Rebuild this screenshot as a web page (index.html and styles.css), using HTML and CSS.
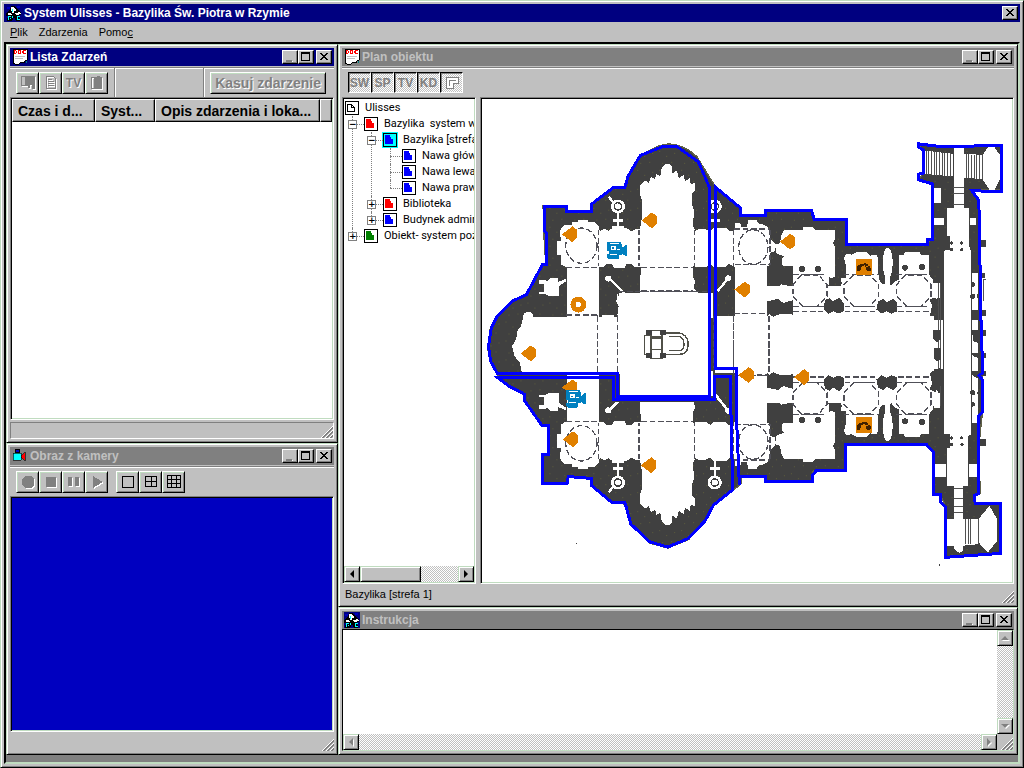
FILE: index.html
```html
<!DOCTYPE html>
<html lang="pl">
<head>
<meta charset="utf-8">
<title>System Ulisses - Bazylika Św. Piotra w Rzymie</title>
<link rel="stylesheet" href="styles.css">
</head>
<body>
<svg class="defs" aria-hidden="true">
  <symbol id="i-min" viewBox="0 0 12 10"><path d="M2 8h6v2H2z" fill="#808080"/><path d="M8 9h1v2H3v-1h5z" fill="#fff"/></symbol>
  <symbol id="i-max" viewBox="0 0 12 10"><path d="M1 0h9v9H1zM2 2v6h7V2z" fill="#000" fill-rule="evenodd"/></symbol>
  <symbol id="i-close" viewBox="0 0 12 10"><path d="M2 1h2v1h1v1h2V2h1V1h2v1H9v1H8v1H7v1h1v1h1v1h1v1H8V7H7V6H5v1H4v1H2V7h1V6h1V5h1V4H4V3H3V2H2z" fill="#000"/></symbol>
  <symbol id="i-app" viewBox="0 0 16 16"><path d="M0 0h16v16H0z" fill="#000080"/><path d="M5 1h4l3 4 3 2v3h-2l1 6h-4l-2-4-2 4H1l1-5H0V8l4-3z" fill="#000"/><path d="M5 2h3v1h1v1h1v2H8v2H6V6H5zM2 8h3v1h1v1H2zM9 8h3V7h2v1h1v1h-2v1h-3V9H9z" fill="#fff"/><path d="M2 11h3v1H3v3H2zM6 11h1v2H6zM11 11h3v1h-2v2h2v1h-3zM4 13h1v1H4zM6 4h1v3H6z" fill="#00ffff"/><path d="M11 1h3v2h-3zM1 2h3v2H1z" fill="#0000c0"/></symbol>
  <symbol id="i-doc" viewBox="0 0 16 16"><path d="M1 0h14v11l-2 1-1 2-3-1-2 2H3l-1-1H1z" fill="#fff" stroke="#000"/><path d="M2 1h2v1h1v2H4v1H2zM6 1h3v4H6zM11 1h3v1h-2v2h2v1h-3v-1h-1V2h1z" fill="#f00"/><path d="M3 2h1v2H3zM7 2h1v2H7z" fill="#fff"/><path d="M3 7h10v1H3zM3 9h8v1H3z" fill="#c0c0c0"/><path d="M14 12h1v2h-1z" fill="#008080"/></symbol>
  <symbol id="i-cam" viewBox="0 0 16 16"><path d="M3 1h4v3H3z" fill="#0000c0" stroke="#000"/><path d="M1 5h8v7H1z" fill="#0ff" stroke="#000" stroke-width=".6"/><path d="M9 8l4-4v9l-4-4z" fill="#f00" stroke="#000" stroke-width=".6"/></symbol>
  <symbol id="i-node" viewBox="0 0 14 14"><path d="M0 0h14v14H0z" fill="#000"/><path d="M1 1h12v12H1z" class="node-bg"/><path d="M2 2h5v2h1v2h2v5H2z" fill="currentColor"/></symbol>
  <symbol id="i-root" viewBox="0 0 14 14"><path d="M.5.5h13v13H.5z" fill="#fff" stroke="#000"/><path d="M2.500 3.500h4v3h3v4h-7zM6.500 3.500l3 3" fill="none" stroke="#000"/></symbol>
  <symbol id="i-grip" viewBox="0 0 12 12"><path d="M0 12L12 0M4 12l8-8M8 12l4-4" stroke="#fff" stroke-width="1.200"/><path d="M1.500 12L12 1.500M5.500 12L12 5.500M9.500 12L12 9.500" stroke="#808080" stroke-width="1.600"/></symbol>
</svg>

<div class="app frame">
  <header class="title active">
    <svg class="ico"><use href="#i-app"/></svg><h1>System Ulisses - Bazylika Św. Piotra w Rzymie</h1>
    <button class="cap" aria-label="Zamknij"><svg><use href="#i-close"/></svg></button>
  </header>
  <nav class="menu">
    <button><u>P</u>lik</button><button>Zdarzenia</button><button>Pomo<u>c</u></button>
  </nav>
  <main class="mdi">
    <div class="col left">
      <section class="frame win events">
        <header class="title active">
          <svg class="ico"><use href="#i-doc"/></svg><h2>Lista Zdarzeń</h2>
          <button class="cap" aria-label="Minimalizuj"><svg><use href="#i-min"/></svg></button><button class="cap" aria-label="Maksymalizuj"><svg><use href="#i-max"/></svg></button><button class="cap gap" aria-label="Zamknij"><svg><use href="#i-close"/></svg></button>
        </header>
        <div class="toolbar">
          <div class="group">
            <button class="tool off" aria-label="Zapisz"><svg viewBox="0 0 16 16"><path d="M1 1h14v13h-3v-4h-2v3H8v-2H1z" fill="#808080"/><path d="M2 2h3v8H2z" fill="#c0c0c0"/></svg></button>
            <button class="tool off" aria-label="Dokument"><svg viewBox="0 0 16 16"><path d="M3.500 1.500h7l2 2v10h-9z" fill="none" stroke="#808080"/><path d="M5 4.500h4M5 6.500h6M5 8.500h6M5 10.500h6" stroke="#808080"/></svg></button>
            <button class="tool off">TV</button>
            <button class="tool off" aria-label="Drzwi"><svg viewBox="0 0 16 16"><path d="M2.500 2.500h3v11h-3z" fill="none" stroke="#808080"/><path d="M6 2h2V1h3v1h2v12H6z" fill="#808080"/></svg></button>
          </div>
          <div class="group end"><button class="tool off wide">Kasuj zdarzenie</button></div>
        </div>
        <div class="sunken list">
          <table>
            <thead><tr><th class="c1">Czas i d...</th><th class="c2">Syst...</th><th class="c3">Opis zdarzenia i loka...</th><th></th></tr></thead>
          </table>
        </div>
        <footer class="status boxed"><svg class="grip"><use href="#i-grip"/></svg></footer>
      </section>

      <section class="frame win camera">
        <header class="title">
          <svg class="ico"><use href="#i-cam"/></svg><h2>Obraz z kamery</h2>
          <button class="cap" aria-label="Minimalizuj"><svg><use href="#i-min"/></svg></button><button class="cap" aria-label="Maksymalizuj"><svg><use href="#i-max"/></svg></button><button class="cap gap" aria-label="Zamknij"><svg><use href="#i-close"/></svg></button>
        </header>
        <div class="toolbar">
          <div class="row">
            <button class="tool off" aria-label="Nagrywaj"><svg viewBox="0 0 16 16"><path d="M5 2h6l3 3v6l-3 3H5l-3-3V5z" fill="#808080"/></svg></button>
            <button class="tool off" aria-label="Zatrzymaj"><svg viewBox="0 0 16 16"><path d="M3 3h10v10H3z" fill="#808080"/></svg></button>
            <button class="tool off" aria-label="Pauza"><svg viewBox="0 0 16 16"><path d="M2 3h4v9H2zM9 3h4v9H9z" fill="#808080"/></svg></button>
            <button class="tool off" aria-label="Odtwarzaj"><svg viewBox="0 0 16 16"><path d="M4 2l10 6-10 6z" fill="#808080"/></svg></button>
          </div>
          <div class="row views">
            <button class="tool" aria-label="Jeden obraz"><svg viewBox="0 0 16 16"><path d="M2.500 2.500h11v11h-11z" fill="none" stroke="#000"/></svg></button>
            <button class="tool" aria-label="Cztery obrazy"><svg viewBox="0 0 16 16"><path d="M2.500 2.500h11v10h-11zM8 2v11M2 7.500h12" fill="none" stroke="#000"/></svg></button>
            <button class="tool" aria-label="Dziewięć obrazów"><svg viewBox="0 0 16 16"><path d="M1.500 1.500h13v12h-13zM5.500 1v13M10.500 1v13M1 5.500h14M1 9.500h14" fill="none" stroke="#000"/></svg></button>
          </div>
        </div>
        <div class="sunken video"></div>
        <footer class="status tall"><svg class="grip"><use href="#i-grip"/></svg></footer>
      </section>
    </div>

    <div class="col right">
      <section class="frame win plan">
        <header class="title">
          <svg class="ico"><use href="#i-doc"/></svg><h2>Plan obiektu</h2>
          <button class="cap" aria-label="Minimalizuj"><svg><use href="#i-min"/></svg></button><button class="cap" aria-label="Maksymalizuj"><svg><use href="#i-max"/></svg></button><button class="cap gap" aria-label="Zamknij"><svg><use href="#i-close"/></svg></button>
        </header>
        <div class="toolbar">
          <div class="row">
            <button class="tool on">SW</button><button class="tool on">SP</button><button class="tool on">TV</button><button class="tool on">KD</button>
            <button class="tool on" aria-label="Strefa"><svg viewBox="0 0 16 16"><path d="M2.500 2.500h12v6h-5v5h-7z" fill="#fff" stroke="#808080"/><path d="M5 5h7v1H6v5H5z" fill="#808080"/></svg></button>
          </div>
        </div>
        <div class="split">
          <div class="sunken treebox">
            <ul class="tree">
              <li><span class="node root"><svg class="ni"><use href="#i-root"/></svg>Ulisses</span>
                <ul>
                  <li><span class="node"><button class="exp" aria-label="Zwiń">−</button><svg class="ni red"><use href="#i-node"/></svg>Bazylika&nbsp; system wł</span>
                    <ul>
                      <li><span class="node"><button class="exp" aria-label="Zwiń">−</button><svg class="ni blue sel"><use href="#i-node"/></svg>Bazylika [strefa</span>
                        <ul>
                          <li><span class="node leaf"><svg class="ni blue"><use href="#i-node"/></svg>Nawa głów</span></li>
                          <li><span class="node leaf"><svg class="ni blue"><use href="#i-node"/></svg>Nawa lewa</span></li>
                          <li><span class="node leaf"><svg class="ni blue"><use href="#i-node"/></svg>Nawa praw</span></li>
                        </ul>
                      </li>
                      <li><span class="node"><button class="exp" aria-label="Rozwiń">+</button><svg class="ni red"><use href="#i-node"/></svg>Biblioteka</span></li>
                      <li><span class="node"><button class="exp" aria-label="Rozwiń">+</button><svg class="ni blue"><use href="#i-node"/></svg>Budynek admir</span></li>
                    </ul>
                  </li>
                  <li><span class="node"><button class="exp" aria-label="Rozwiń">+</button><svg class="ni green"><use href="#i-node"/></svg>Obiekt- system poż</span></li>
                </ul>
              </li>
            </ul>
            <div class="hbar"><button class="sb left-arrow" aria-label="W lewo"></button><span class="thumb"></span><button class="sb right-arrow" aria-label="W prawo"></button></div>
          </div>
          <div class="sunken mapbox">
            <svg class="map" viewBox="6 -93 1590 1452" role="img" aria-label="Plan bazyliki">
              <defs>
                <pattern id="stone" width="66" height="57" patternUnits="userSpaceOnUse"><path d="M0 0h66v57H0z" fill="#404040"/><path d="M9 6h3v3H9zM30 21h3v3h-3zM54 12h3v3h-3zM18 42h3v3h-3zM45 39h3v3h-3z" fill="#5c5c3c"/></pattern>
                <g id="sensor"><path d="M-24 0L7 -24L22 -13V10L7 24z" fill="#e08000"/></g>
                <g id="phone"><path d="M0 0h48v48H0z" fill="#e08000"/><path d="M3 27q0-6 8-9l18-5 8 4v5l-8 2-3-4-9 4-1 6-5 8H4zM32 26l9-4 4 6v8l-9 2-5-4z" fill="#402000"/></g>
                <g id="cctv"><path d="M0 3h42v6h3v12l9-8h6v33h-6l-9-7v3H36v10l-6 4H4l-4-5V41h6V32H0z" fill="#0080c0"/><path d="M9 6h27v3H9zM12 15h15v12H12zM9 39h21v3H9zM30 24h9v3h-9z" fill="#fff"/><path d="M15 20h6v4h-6z" fill="#0080c0"/></g>
                <g id="half">
                  <path class="w" d="M480 490V440L483 430V412H478V300L482 285 486 255V215L480 195V165L496 152 506 160 512 140 525 148 528 132 540 140 545 112 555 103H568L577 112V130L590 122 596 145 610 136 615 155 628 145 632 162 645 160V180L636 192V225L642 245 638 290 645 300V410H640V445L645 455 640 475 655 490z"/>
                  <path class="w" d="M352 300L362 303 372 296 385 303 395 296H440L455 305 465 298H480V412H462L455 402H440L432 415H402L396 404H378L368 412H352z"/>
                  <path class="w" d="M230 335H243V322H240V300L252 285H275V278H292V270H322V278H345L355 290V412L355 565H260V415L243 405V375H230z"/>
                  <path class="w" d="M176 450H195L200 456 210 446H232V458L256 447V456L235 470V500H205L196 494H176V486H190V464H176z"/>
                  <path class="w" d="M412 490V500L425 490H700V565H410L415 530 408 515z"/>
                  <path class="ln" d="M385 445L432 492"/><circle class="w" cx="384" cy="447" r="9"/>
                  <path class="ln" d="M413 245V300M398 272H428M385 200L402 222M396 292H430"/>
                  <circle cx="413" cy="230" r="17" fill="#404040" stroke="#fff" stroke-width="8"/><circle cx="413" cy="230" r="9" fill="#fff"/>
                  <path class="ln" d="M704 245V300M690 272H720"/><circle cx="704" cy="230" r="17" fill="#404040" stroke="#fff" stroke-width="8"/><circle cx="704" cy="230" r="9" fill="#fff"/>
                  <path class="w" d="M645 305L655 298H675L690 306 700 296H740L750 305 765 300V280H780L785 292H800L805 272H830L838 284H850L862 290 870 300V325L885 340V365L870 370 872 405 860 410V565H765V412L745 402 735 412H700L690 403 680 412H645z"/>
                  <path class="ln" d="M712 485L744 447"/><circle class="w" cx="744" cy="446" r="9"/>
                  <path class="d" d="M258 413H355M483 414H640M483 484H640M355 300V410M476 300V410M643 300V410M352 555V640M411 555V640M258 555H355M760 300V410M765 405H870M760 555V640M762 552H865M867 560V640M870 300V405M763 298H870"/>
                  <ellipse class="d" cx="303" cy="348" rx="47" ry="53"/><ellipse class="d" cx="820" cy="352" rx="44" ry="52"/>
                  <path class="w" d="M885 345L900 340 905 315 912 300H970V292H1000L1005 300H1065V330L1060 340 1066 355V408H908L905 390 912 380 890 372z"/>
                  <path class="w" d="M850 470H900L905 460 925 470H940V408H1065V440L1050 450 1045 470H1085V445H1098V405L1092 385 1100 372 1115 375 1130 367H1160L1170 378 1190 374 1196 390V435L1200 455 1212 465 1224 460 1236 468 1245 455 1258 450V375H1272L1276 368H1320L1325 376H1348V435L1360 450V460L1375 462V505L1360 512 1350 565H860L875 545 862 520 850 505z"/>
                  <ellipse class="w" cx="1224" cy="400" rx="15" ry="46"/><path class="w" d="M1217 430h14v40h-14z"/>
                  <path class="k" d="M860 415H935V440L928 455 910 468 895 455 872 465 862 455zM862 515L895 508 910 520 938 512V555L900 553 880 562 862 550zM1035 512L1050 505 1060 515 1078 505 1092 520V545L1075 552 1060 545 1045 553 1032 540zM1195 515L1210 508 1222 518 1240 507 1253 520V545L1235 553 1222 545 1205 552 1190 540zM1047 440L1060 450 1080 445 1088 465 1070 460 1050 465zM1350 510L1370 500V540L1388 550V570L1370 560z"/>
                  <circle class="k" cx="966" cy="418" r="9"/><circle class="k" cx="1014" cy="418" r="9"/><circle class="k" cx="1276" cy="414" r="9"/><circle class="k" cx="1327" cy="412" r="9"/>
                  <path class="d" d="M940 545H1030M1095 545H1190M1255 545H1350M940 435H1040M1092 435H1198M1250 435H1350M940 530H1035M1250 530H1350M1095 530H1190M964 436L939 465V500L968 530H1012L1041 500V465L1016 436zM1120 436L1093 465V500L1123 530H1170L1197 500V465L1168 436zM1276 436L1251 465V500L1280 530H1325L1354 500V465L1327 436z"/>
                </g>
              </defs>
              <path fill="url(#stone)" stroke="#606048" stroke-width="4" d="M706 170L690 145 650 80Q610 42 565 42L535 48 480 75 440 140 432 175 400 172 335 222V245H262L258 228H188L190 310 196 402 185 405 138 495 95 515 50 560 28 600 22 660 30 700 50 735 85 770 133 795 135 815 185 890H205V975H185V1065H262L264 1042 335 1050V1070L395 1120 437 1125 452 1187 508 1242 563 1257 625 1232 675 1177 700 1130 757 1085 784 1063V1042H855V1058H997L1000 1025H1100L1097 945H1340L1362 970V1095H1382L1397 1130V1287L1562 1275V1122H1485V1098L1502 1092 1498 950 1508 855 1510 710 1505 600 1498 210 1477 180H1565V45L1390 50 1317 42 1330 60V130L1317 150 1360 162 1357 325 1343 343H1100V268H1000L995 240H857V257H782V235z"/>
              <path class="w" d="M706 558H1362V732H706z"/>
              <use href="#half"/><use href="#half" transform="matrix(1 0 0 -1 0 1290)"/>
              <path class="w" d="M130 552L140 546 155 550 158 562H365V556H400V562H415V490H690V800H415V735H125L118 700 102 680 95 650 108 625 110 605 122 590z"/>
              <path class="k" d="M402 735H418V800H402zM400 800H700V818H400zM700 745H752V790L735 800 700 795z"/>
              <path class="ln" d="M706 795L744 843"/>
              <path class="d" d="M352 560V730M411 560V800M258 557H352M415 486H690M760 560V735M867 560V735M700 560V715M830 737H860M940 743H1040M1095 743H1190M1255 743H1350"/>
              <path class="w" d="M1363 210V175H1385V220H1363zM1362 265H1392V285H1362zM1401 235H1467V340L1475 370V915L1465 920V1070H1403V920L1392 915V370L1401 350zM1422 55H1452V235H1422zM1422 1070H1450V1170H1422zM1472 265H1490V285H1472zM1366 1003H1400V1042H1366zM1468 1003H1495V1042H1468zM1476 430H1496V880H1476zM1362 570H1390V720H1362zM1364 460H1380V505H1364zM1364 790H1380V835H1364z"/>
              <path class="w" d="M1335 62L1420 72V140L1335 132zM1453 72L1510 75V148L1453 143zM1510 75L1525 52H1545L1561 75V150L1545 180H1530L1510 150zM1400 1170H1497V1245L1450 1250V1265L1440 1272 1425 1262 1422 1250H1400zM1497 1170L1530 1130 1553 1170V1235L1525 1270 1497 1240z"/>
              <path d="M1340 62V133M1348 62V134M1356 63V135M1364 64V136M1372 65V137M1380 66V138M1388 67V138M1396 68V139M1404 69V140M1412 70V140M1460 73V143M1468 73V144M1476 74V145M1484 74V146M1492 75V147M1500 75V147M1508 75V148M1420 173H1452M1420 190H1452M1420 225H1452M1422 1078H1450M1422 1108H1450M1422 1133H1450M1422 1150H1450M1458 1170V1245M1466 1170V1245M1474 1170V1245M1496 1170V1245M1378 460V720M1384 460V830M1513 450V515M1510 450H1518" fill="none" stroke="#505050" stroke-width="3"/>
              <path class="k" d="M1360 600H1385V632H1378L1372 640 1360 628zM1364 655H1385V690L1372 695 1362 685zM1354 728L1382 715 1388 750 1380 780 1362 770zM1475 540H1520V560H1495V570H1475zM1475 600H1520V620H1495V640L1480 635V615H1475zM1475 670H1520V685H1495L1480 680zM1475 725H1520V740H1500V750L1480 740zM1494 330H1518V352H1494zM1494 430H1515V445H1494zM1494 930H1518V950H1494zM1394 320H1412V360H1394zM1394 915H1412V955H1394z"/>
              <g class="k"><circle cx="1416" cy="340" r="5"/><circle cx="1416" cy="360" r="5"/><circle cx="1447" cy="340" r="5"/><circle cx="1447" cy="360" r="5"/><circle cx="1416" cy="926" r="5"/><circle cx="1416" cy="946" r="5"/><circle cx="1447" cy="926" r="5"/><circle cx="1447" cy="946" r="5"/><circle cx="1480" cy="465" r="7"/><circle cx="1480" cy="500" r="8"/><circle cx="1498" cy="500" r="7"/><circle cx="1480" cy="790" r="8"/><circle cx="1500" cy="790" r="7"/><circle cx="1480" cy="825" r="7"/></g>
              <path class="altar" d="M492 617H510V675H492zM512 603H545V625H512zM512 622H545V660H512zM512 660H545V688H512zM545 610H590Q624 612 624 645 624 675 595 675H545M568 620H590Q612 622 612 645 612 664 592 664H568"/>
              <path class="k" d="M498 600H515V615H498zM540 602H556V616H540zM498 672H515V687H498zM540 672H556V687H540zM286 1242h3v3h-3zM1378 1306h4v4h-4z"/>
              <path class="zone" d="M50 731L30 695 24 650 32 597 50 560 95 515 138 495 186 405H198L197 310 193 305V230H258V245H335V222L400 173H434L443 140 480 77 545 51H592L655 96 689 175V802H412V731z"/>
              <path class="zone" d="M52 745L85 770 133 795V815L185 889H205V977H185V1063H260L264 1042 335 1048V1070L395 1120H434L452 1185 508 1238 563 1254 625 1228 675 1175 700 1128 758 1082 754 900 750 740H702V811H400V745z"/>
              <path class="zone" d="M706 172V716H770V880L778 1066V1042H856V1056H997V1040L1008 1025H1098V945H1340L1362 970V1096H1384V1120L1397 1132V1285L1562 1273V1122H1487L1484 1100 1498 1092V860L1508 850V750L1498 738 1510 730 1505 600 1498 212 1477 183 1565 185V46L1390 51 1317 42V52L1331 60V130L1317 133V150L1358 162V328H1343V343H1101V270H1003L995 242H858V257H782V235z"/>
              <use href="#sensor" x="508" y="272"/><use href="#sensor" x="269" y="314"/><use href="#sensor" x="787" y="480"/><use href="#sensor" x="924" y="336"/><use href="#sensor" x="144" y="672"/><use href="#sensor" x="269" y="774"/><use href="#sensor" x="271" y="930"/><use href="#sensor" x="506" y="1008"/><use href="#sensor" x="799" y="737"/><use href="#sensor" x="966" y="743"/>
              <circle cx="294" cy="525" r="16" fill="#fff" stroke="#e08000" stroke-width="16"/>
              <use href="#cctv" x="381" y="333"/><use href="#cctv" x="258" y="779"/>
              <use href="#phone" x="1128" y="387"/><use href="#phone" x="1128" y="864"/>
            </svg>
          </div>
        </div>
        <footer class="status text">Bazylika [strefa 1]<svg class="grip"><use href="#i-grip"/></svg></footer>
      </section>

      <section class="frame win notes">
        <header class="title">
          <svg class="ico"><use href="#i-app"/></svg><h2>Instrukcja</h2>
          <button class="cap" aria-label="Minimalizuj"><svg><use href="#i-min"/></svg></button><button class="cap" aria-label="Maksymalizuj"><svg><use href="#i-max"/></svg></button><button class="cap gap" aria-label="Zamknij"><svg><use href="#i-close"/></svg></button>
        </header>
        <div class="editor">
          <textarea aria-label="Instrukcja"></textarea>
          <div class="vbar"><button class="sb up-arrow" aria-label="W górę" disabled></button><button class="sb down-arrow" aria-label="W dół" disabled></button></div>
          <div class="hbar"><button class="sb left-arrow" aria-label="W lewo" disabled></button><button class="sb right-arrow" aria-label="W prawo" disabled></button></div>
          <div class="corner"><svg class="grip"><use href="#i-grip"/></svg></div>
        </div>
      </section>
    </div>
  </main>
</div>
</body>
</html>
```
FILE: styles.css
```css
* { box-sizing: border-box; }
body { margin: 0; background: #c0c0c0; color: #000; font: 11px/16px "Liberation Sans", Arial, sans-serif; }
button { font: inherit; color: inherit; margin: 0; padding: 0; border: 0; background: #c0c0c0; border-radius: 0; }
svg { display: block; shape-rendering: crispEdges; }
.defs { position: absolute; width: 0; height: 0; }

.frame {
  display: flex; flex-direction: column; min-height: 0; padding: 3px; background: #c0c0c0;
  border: 1px solid; border-color: #c0dcc0 #000 #000 #c0dcc0;
  box-shadow: inset 1px 1px #fff, inset -1px -1px #808080;
}
.app { height: 100vh; }

.title { display: flex; align-items: center; flex: none; height: 18px; padding: 0 2px; background: #808080; color: #c0c0c0; }
.title.active { background: #000080; color: #fff; }
.title h1, .title h2 { flex: 1; margin: 0; padding-left: 2px; font-size: 12px; line-height: 16px; font-weight: bold; white-space: nowrap; }
.ico { width: 16px; height: 16px; flex: none; }
.cap {
  display: grid; place-items: center; width: 16px; height: 14px; flex: none;
  border: 1px solid; border-color: #fff #000 #000 #fff; box-shadow: inset -1px -1px #808080;
}
.cap svg { width: 12px; height: 10px; }
.cap.gap { margin-left: 2px; }

.menu { display: flex; flex: none; height: 20px; align-items: center; padding-left: 6px; gap: 11px; }
.menu button { line-height: 16px; }

.mdi {
  flex: 1; min-height: 0; display: grid; grid-template-columns: 332fr 680fr; padding-bottom: 7px; background: #808080;
  border: 2px solid; border-color: #000 #c0dcc0 #c0dcc0 #000;
}
.col { display: flex; flex-direction: column; min-width: 0; min-height: 0; }
.events { flex: 391 1 0; }
.camera { flex: 304 1 0; }
.plan { flex: 555 1 0; }
.notes { flex: 140 1 0; }

.toolbar {
  display: flex; flex: none; height: 30px; margin-top: 1px; padding: 0 6px;
  border-top: 1px solid #808080; box-shadow: inset 0 1px #fff;
}
.group, .row { display: flex; padding-top: 4px; }
.group { padding-right: 6px; border-right: 1px solid #808080; box-shadow: 1px 0 #fff; }
.group.end { margin-left: auto; padding: 4px 2px 0 6px; border-right: 0; border-left: 1px solid #808080; box-shadow: inset 1px 0 #fff; }
.views { margin-left: 8px; }
.tool {
  display: grid; place-items: center; width: 23px; height: 22px; font-weight: bold; font-size: 12px; line-height: 16px;
  border: 1px solid; border-color: #fff #000 #000 #fff; box-shadow: inset 1px 1px #c0dcc0, inset -1px -1px #808080;
}
.tool svg { width: 16px; height: 16px; }
.off { color: #808080; text-shadow: 1px 1px #fff; }
.off svg { filter: drop-shadow(1px 1px 0 #fff); }
.wide { width: auto; padding: 0 4px; font-size: 14px; }
.on, .hbar, .vbar { background: repeating-conic-gradient(#fff 0 25%, #c0c0c0 0 50%) 0 0 / 2px 2px; }
.on { height: 21px; color: #808080; border-color: #000 #fff #fff #000; box-shadow: inset 1px 1px #808080; }

.sunken {
  flex: 1; min-height: 0; min-width: 0; background: #fff;
  border: 1px solid; border-color: #808080 #fff #fff #808080; box-shadow: inset 1px 1px #000, inset -1px -1px #c0dcc0;
  padding: 1px;
}
.list table { width: 100%; height: 23px; border-collapse: separate; border-spacing: 0; table-layout: fixed; }
.list th {
  height: 23px; padding: 0 5px; background: #c0c0c0; font-size: 14px; line-height: 16px; text-align: left; white-space: nowrap; overflow: hidden;
  border: 1px solid; border-color: #fff #000 #000 #fff; box-shadow: inset -1px -1px #808080;
}
.c1 { width: 83px; }
.c2 { width: 60px; }
.c3 { width: 165px; }
.video { background: #0000c0; }

.status { position: relative; flex: none; }
.boxed { height: 17px; margin-top: 2px; border: 1px solid; border-color: #808080 #fff #fff #808080; }
.tall { height: 19px; }
.text { height: 19px; padding: 2px 3px; }
.grip { position: absolute; right: 0; bottom: 0; width: 12px; height: 12px; }

.split { display: grid; grid-template-columns: 134fr 534fr; gap: 4px; flex: 1; min-height: 0; }
.treebox { display: flex; flex-direction: column; justify-content: space-between; overflow: hidden; }
.mapbox { overflow: hidden; }
.map { width: 100%; height: 100%; }
.w { fill: #fff; }
.k { fill: #404040; }
.ln { fill: none; stroke: #fff; stroke-width: 7; }
.d { fill: none; stroke: #505058; stroke-width: 4; stroke-dasharray: 17 8; }
.altar { fill: none; stroke: #505048; stroke-width: 4; }
.zone { fill: none; stroke: #00f; stroke-width: 9; stroke-linejoin: miter; }

.tree, .tree ul { list-style: none; margin: 0; padding: 0; }
.tree { padding: 1px 0 0 1px; white-space: nowrap; overflow: hidden; font-family: Roboto, "Liberation Sans", sans-serif; }
.tree ul { padding-left: 19px; }
.tree > li > ul { padding-left: 3px; }
.tree li { position: relative; }
.node { position: relative; display: flex; align-items: center; height: 16px; }
.ni { flex: none; width: 14px; height: 14px; margin-right: 6px; color: #00f; }
.ni.red { color: #f00; }
.ni.green { color: #008000; }
.ni.sel { --bg: #0ff; outline: 1px solid #0ff; }
.node-bg { fill: var(--bg, #fff); }
.exp {
  position: relative; z-index: 1; flex: none; width: 9px; height: 9px; margin-right: 7px; background: #fff; border: 1px solid #808080;
  font: bold 9px/7px "DejaVu Sans", sans-serif; text-align: center;
}
.tree ul .node::before { content: ""; position: absolute; left: 4px; top: 8px; width: 12px; border-top: 1px dotted #808080; }
.tree ul > li::before { content: ""; position: absolute; left: 4px; top: 0; bottom: 0; border-left: 1px dotted #808080; }
.tree ul > li:last-child::before { bottom: auto; height: 8px; }
.leaf { padding-left: 16px; }

.hbar { display: flex; height: 16px; flex: none; }
.vbar { display: flex; flex-direction: column; justify-content: space-between; width: 16px; }
.sb, .thumb { background: #c0c0c0; border: 1px solid; border-color: #c0dcc0 #000 #000 #c0dcc0; box-shadow: inset 1px 1px #fff, inset -1px -1px #808080; }
.sb { display: grid; place-items: center; width: 16px; height: 16px; flex: none; }
.sb::before { content: ""; border: 4px solid transparent; }
.left-arrow::before { border-right-color: #000; border-left-width: 0; }
.right-arrow::before { border-left-color: #000; border-right-width: 0; }
.up-arrow::before { border-bottom-color: #000; border-top-width: 0; }
.down-arrow::before { border-top-color: #000; border-bottom-width: 0; }
.sb:disabled::before { filter: drop-shadow(1px 1px 0 #fff); }
.left-arrow:disabled::before { border-right-color: #808080; }
.right-arrow:disabled::before { border-left-color: #808080; }
.up-arrow:disabled::before { border-bottom-color: #808080; }
.down-arrow:disabled::before { border-top-color: #808080; }
.thumb { width: 47%; }
.right-arrow { margin-left: auto; }

.editor { flex: 1; min-height: 0; display: grid; grid-template: 1fr 16px / 1fr 16px; border: 1px solid; border-color: #000 #c0dcc0 #c0dcc0 #000; }
.editor textarea { width: 100%; height: 100%; min-height: 0; margin: 0; padding: 2px; border: 0; outline: 0; resize: none; overflow: hidden; background: #fff; font: inherit; }
.corner { position: relative; background: #c0c0c0; }
```
